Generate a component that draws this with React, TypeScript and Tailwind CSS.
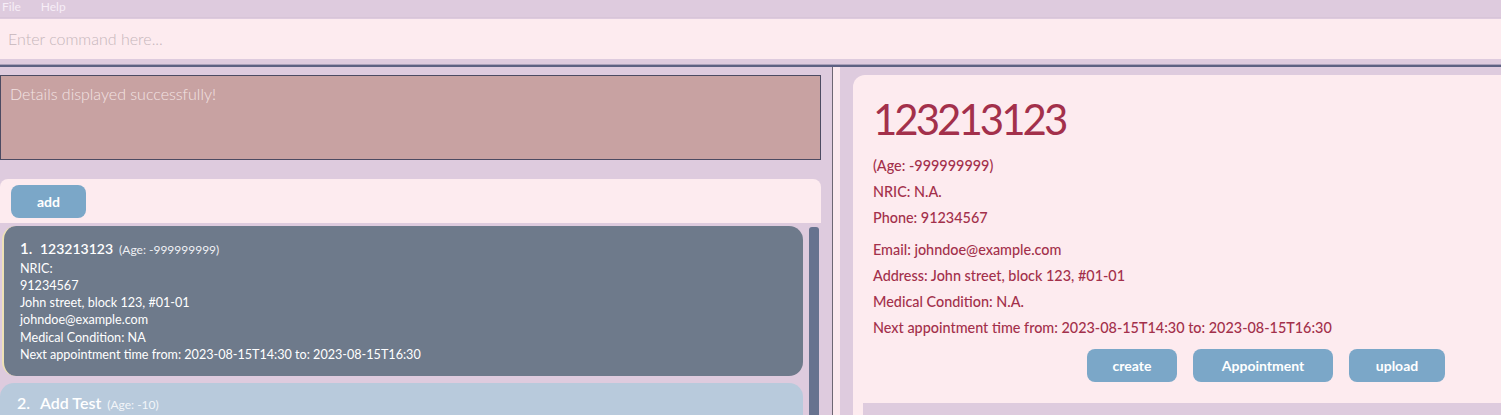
import React from 'react';

const font = { fontFamily: 'Lato, "Open Sans", sans-serif' };

const detailLines = [
  'NRIC:',
  '91234567',
  'John street, block 123, #01-01',
  'johndoe@example.com',
  'Medical Condition: NA',
  'Next appointment time from: 2023-08-15T14:30 to: 2023-08-15T16:30',
];

const ActionButton: React.FC<{ label: string; width: string }> = ({ label, width }) => (
  <button
    className={`${width} h-[33px] rounded-lg bg-[#7ba7c8] text-white text-[14px] font-bold flex items-center justify-center`}
  >
    {label}
  </button>
);

const App: React.FC = () => {
  return (
    <div className="h-[415px] w-full overflow-hidden bg-[#decbde] flex flex-col" style={font}>
      {/* Menu bar */}
      <div className="h-[18px] border-b border-[#d8c5d8] flex items-start gap-5 px-[2px]">
        <span className="text-[#f7eef7] text-[12px] leading-[14px]">File</span>
        <span className="text-[#f7eef7] text-[12px] leading-[14px]">Help</span>
      </div>

      {/* Command box */}
      <div className="mt-[1px] h-[40px] bg-[#fdebef] flex items-center px-[8px]">
        <span className="text-[16px] font-light text-[#c6b6bb]">Enter command here...</span>
      </div>
      <div className="h-[5px]" />
      <div className="h-[1px] bg-[#aaa0b9]" />
      <div className="h-[2px] bg-[#5d6182]" />

      {/* Main area */}
      <div className="flex flex-1 min-h-0">
        {/* Left column */}
        <div className="w-[821px] shrink-0 flex flex-col pt-[8px]">
          <div className="h-[85px] bg-[#c8a2a2] border border-[#4c4b62] px-[9px] pt-[6px]">
            <span className="text-[16px] font-light text-[#f3e3e3]">Details displayed successfully!</span>
          </div>
          <div className="h-[19px]" />
          <div className="h-[44px] bg-[#fdebef] rounded-t-lg flex items-center pl-[11px]">
            <ActionButton label="add" width="w-[75px]" />
          </div>
          <div className="flex flex-1 min-h-0 pt-[3px]">
            <div className="w-[803px] flex flex-col gap-[7px]">
              <div className="ml-[2px] h-[150px] shrink-0 rounded-[14px] bg-[#6e7a8b] border-l-2 border-[#efe2b6] pl-[16px] pt-[11px] text-white">
                <div className="flex items-baseline">
                  <span className="text-[15px] font-semibold w-[20px]">1.</span>
                  <span className="text-[14px] font-semibold">123213123</span>
                  <span className="text-[12px] ml-[6px] text-[#eef0f4]">(Age: -999999999)</span>
                </div>
                <div className="text-[12.6px] leading-[17.3px]">
                  {detailLines.map((l) => (
                    <div key={l}>{l}</div>
                  ))}
                </div>
              </div>
              <div className="h-[60px] shrink-0 rounded-[14px] bg-[#b8cadc] pl-[17px] pt-[8px] text-white">
                <div className="flex items-baseline">
                  <span className="text-[16px] font-semibold w-[23px]">2.</span>
                  <span className="text-[16px] font-semibold">Add Test</span>
                  <span className="text-[12px] ml-[6px] text-[#f2f5f9]">(Age: -10)</span>
                </div>
                <div className="flex gap-[9px] mt-[5px]">
                  <span className="w-[40px] h-[16px] rounded bg-[#7fbfcb]" />
                  <span className="w-[42px] h-[16px] rounded bg-[#7fbfcb]" />
                </div>
              </div>
            </div>
            <div className="ml-[6px] mt-[1px] w-[10px] rounded-t-[3px] bg-[#67738f]" />
          </div>
        </div>

        {/* Divider */}
        <div className="w-[11px] shrink-0" />
        <div className="w-[1px] shrink-0 bg-[#6d6673]" />
        <div className="w-[7px] shrink-0 bg-[#fbe9ee]" />
        <div className="w-[13px] shrink-0" />

        {/* Right panel */}
        <div className="flex-1 min-w-0 pt-[8px]">
          <div className="h-full bg-[#fdebef] rounded-tl-xl flex flex-col">
            <div className="pl-[20px] pt-[16px] text-[#a3304b]">
              <div className="text-[42px] leading-[56px] font-normal tracking-[-3px]">123213123</div>
              <div className="mt-[6px] text-[14.4px] font-medium leading-[26px]">
                <div>(Age: -999999999)</div>
                <div>NRIC: N.A.</div>
                <div>Phone: 91234567</div>
                <div className="mt-[6px]">Email: johndoe@example.com</div>
                <div>Address: John street, block 123, #01-01</div>
                <div>Medical Condition: N.A.</div>
                <div>Next appointment time from: 2023-08-15T14:30 to: 2023-08-15T16:30</div>
              </div>
            </div>
            <div className="flex gap-[16px] pl-[234px] mt-[8px]">
              <ActionButton label="create" width="w-[90px]" />
              <ActionButton label="Appointment" width="w-[140px]" />
              <ActionButton label="upload" width="w-[96px]" />
            </div>
            <div className="ml-[10px] mt-[21px] flex-1 bg-[#decbde]" />
          </div>
        </div>
      </div>
    </div>
  );
};

export default App;
